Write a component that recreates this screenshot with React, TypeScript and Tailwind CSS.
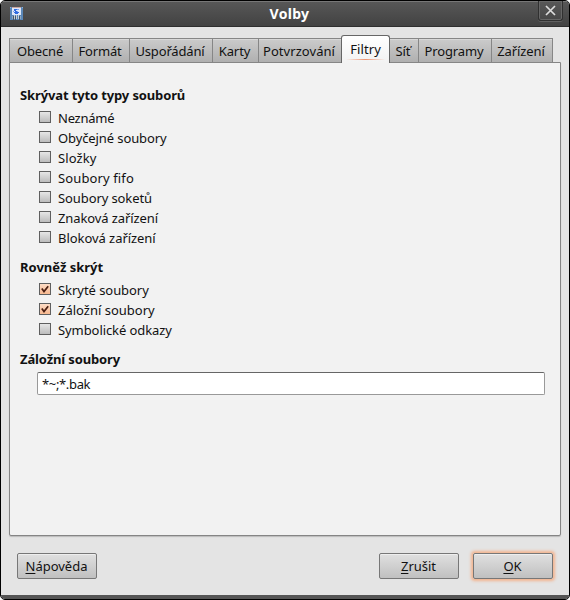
import React from "react";

type Tab = { label: string; width: string; tracking: string };

const tabs: Tab[] = [
  { label: "Obecné", width: "w-[64px]", tracking: "tracking-[-0.15px]" },
  { label: "Formát", width: "w-[58px]", tracking: "tracking-[-0.15px]" },
  { label: "Uspořádání", width: "w-[84px]", tracking: "tracking-[-0.15px]" },
  { label: "Karty", width: "w-[47px]", tracking: "tracking-[-0.1px]" },
  { label: "Potvrzování", width: "w-[84px]", tracking: "tracking-[0.05px]" },
  { label: "Filtry", width: "w-[49px]", tracking: "tracking-[0.1px]" },
  { label: "Síť", width: "w-[30px]", tracking: "tracking-[-0.1px]" },
  { label: "Programy", width: "w-[74px]", tracking: "tracking-[-0.1px]" },
  { label: "Zařízení", width: "w-[62px]", tracking: "tracking-[-0.1px]" },
];

type Option = { label: string; tracking: string; checked?: boolean };

const fileTypes: Option[] = [
  { label: "Neznámé", tracking: "tracking-[-0.25px]" },
  { label: "Obyčejné soubory", tracking: "tracking-[-0.1px]" },
  { label: "Složky", tracking: "tracking-[0.1px]" },
  { label: "Soubory fifo", tracking: "tracking-[0.12px]" },
  { label: "Soubory soketů", tracking: "tracking-[-0.1px]" },
  { label: "Znaková zařízení", tracking: "tracking-[-0.1px]" },
  { label: "Bloková zařízení", tracking: "tracking-[-0.05px]" },
];

const alsoHide: Option[] = [
  { label: "Skryté soubory", tracking: "tracking-[-0.05px]", checked: true },
  { label: "Záložní soubory", tracking: "", checked: true },
  { label: "Symbolické odkazy", tracking: "tracking-[-0.08px]" },
];

function AppIcon() {
  return (
    <svg width="13" height="13" viewBox="0 0 13 13" shapeRendering="crispEdges">
      <rect width="13" height="13" fill="#5a87b8" />
      <rect x="2" y="0" width="9" height="1" fill="#c9a5a0" />
      <rect x="2" y="1" width="9" height="7" fill="#dfe8f8" />
      <path d="M4 2h3v1h-1v1h1v1h2v1h-1v1h-3v-1h-1v-1h1v-1h-1z" fill="#2f6be0" />
      <path d="M7 2h2v1h-2zM3 4h1v1h-1zM7 4h1v1h-1z" fill="#7da5ee" />
      <path d="M0 0h1v1h-1zM12 0h1v1h-1z" fill="#8db4d8" />
      <path d="M4 8h1v4h-1zM6 8h1v4h-1zM8 8h1v4h-1z" fill="#c5d0d8" />
      <path d="M2 9h1v3h-1zM10 9h1v3h-1z" fill="#8fa9bf" />
      <path d="M3 9h1v4h-1zM5 9h1v4h-1zM9 9h1v4h-1z" fill="#47586b" />
    </svg>
  );
}

function TitleBar() {
  return (
    <header className="relative flex h-[26px] shrink-0 items-start border-b border-[#2e2e2e] bg-linear-to-b from-[#585858] to-[#424242] shadow-[inset_0_1px_#777]">
      <div className="pt-[6px] pl-[9px]">
        <AppIcon />
      </div>
      <h1 className="absolute inset-x-0 top-[3px] pl-[9px] text-center text-[14px] leading-5 font-bold tracking-[0.3px] text-white">Volby</h1>
      <button className="mr-[6px] ml-auto flex h-[20px] w-[25px] items-center justify-center rounded-b-[3px] border border-t-0 border-[#303030] shadow-[inset_0_0_0_1px_#666,0_1px_#606060]">
        <svg width="11" height="11" viewBox="0 0 11 11">
          <path d="M1 1L10 10M10 1L1 10" stroke="#ddd" strokeWidth="1.7" />
        </svg>
      </button>
    </header>
  );
}

function TabBar() {
  return (
    <nav className="relative z-10 -mb-px flex h-[28px] items-end">
      {tabs.map((tab) =>
        tab.label === "Filtry" ? (
          <button key={tab.label} className={`relative z-10 -mr-px h-[28px] rounded-t-[3px] border border-b-0 border-[#666] bg-linear-to-b from-white to-[#f2f2f2] pb-[1px] whitespace-nowrap ${tab.width}`}>
            <span className={tab.tracking}>{tab.label}</span>
            <span className="absolute bottom-[3px] left-[4px] h-px w-[39px] bg-linear-to-r from-[#ee937000] via-[#ee9370] to-[#ee937000]" />
          </button>
        ) : (
          <button key={tab.label} className={`-mr-px h-[25px] border border-[#868686] bg-linear-to-b from-[#cbcbcb] to-[#b0b0b0] pr-[2px] whitespace-nowrap shadow-[inset_0_1px_#d8d8d8] ${tab.width}`}>
            <span className={tab.tracking}>{tab.label}</span>
          </button>
        ),
      )}
    </nav>
  );
}

function CheckRow({ option }: { option: Option }) {
  return (
    <label className="flex h-5 items-start">
      <span className={`mt-[4px] mr-[7px] flex size-[12px] items-center justify-center border border-[#5f5f5f] bg-linear-to-b ${option.checked ? "from-[#fcdcc6] to-[#f7b88f]" : "from-[#e6e6e6] to-[#bcbcbc]"}`}>
        {option.checked && (
          <svg width="8" height="8" viewBox="0 0 8 8">
            <path d="M0.8 3.6L3 6.6L7.2 1.2" fill="none" stroke="#4a1f12" strokeWidth="1.7" />
          </svg>
        )}
      </span>
      <span className={`mt-px whitespace-nowrap ${option.tracking}`}>{option.label}</span>
    </label>
  );
}

function DialogButton({ mnemonic, rest, focused = false }: { mnemonic: string; rest: string; focused?: boolean }) {
  return (
    <button className={`h-[26px] w-[80px] rounded-[2px] border border-[#777] bg-linear-to-b from-[#e0e0e0] to-[#c0c0c0] pr-px ${focused ? "shadow-[0_0_3px_2px_#f3b48f,inset_0_1px_#eee]" : "shadow-[inset_0_1px_#eee]"}`}>
      <span className="underline underline-offset-2">{mnemonic}</span>
      {rest}
    </button>
  );
}

export default function App() {
  return (
    <div className="h-[600px] w-[570px] bg-white">
      <div className="flex h-full flex-col overflow-hidden rounded-[5px] border border-black bg-[#e4e4e4] font-['Noto_Sans',sans-serif] text-[13px] leading-5 text-[#111]">
        <TitleBar />
        <main className="flex flex-1 flex-col px-2 pt-2">
          <TabBar />
          <section className="h-[474px] w-[552px] rounded-b-[2px] border border-[#858585] bg-[#f2f2f2] px-[10px] pt-[22px] shadow-[0_1px_1px_#bbb]">
            <h2 className="font-bold tracking-[-0.13px]">Skrývat tyto typy souborů</h2>
            <div className="mt-[2px] pl-[19px]">
              {fileTypes.map((o) => <CheckRow key={o.label} option={o} />)}
            </div>
            <h2 className="mt-[10px] font-bold">Rovněž skrýt</h2>
            <div className="mt-[2px] pl-[19px]">
              {alsoHide.map((o) => <CheckRow key={o.label} option={o} />)}
            </div>
            <h2 className="mt-[10px] font-bold tracking-[-0.13px]">Záložní soubory</h2>
            <input defaultValue="*~;*.bak" className="mt-[3px] ml-[17px] block h-[23px] w-[508px] rounded-[2px] border border-[#999] border-t-[#666] bg-white px-[4px] tracking-[-0.35px]" />
          </section>
          <footer className="mt-[17px] flex px-2">
            <DialogButton mnemonic="N" rest="ápověda" />
            <div className="ml-auto flex gap-[14px]">
              <DialogButton mnemonic="Z" rest="rušit" />
              <DialogButton mnemonic="O" rest="K" focused />
            </div>
          </footer>
        </main>
        <div className="h-[4px] bg-[#555]" />
      </div>
    </div>
  );
}
